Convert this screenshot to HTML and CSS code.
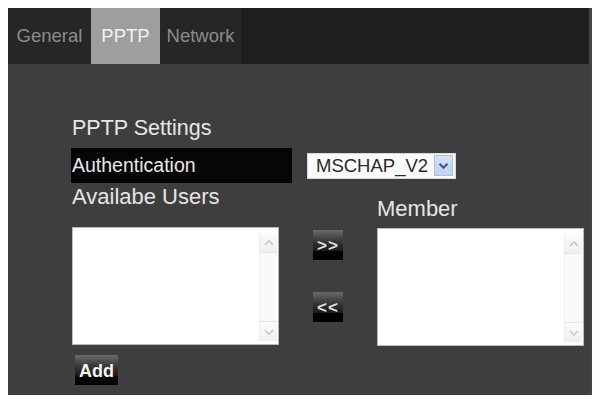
FILE: index.html
```html
<!DOCTYPE html>
<html>
<head>
<meta charset="utf-8">
<link rel="stylesheet" href="styles.css">
</head>
<body>
<div class="panel">
  <div class="tabbar">
    <div class="tab tab-general">General</div>
    <div class="tab tab-pptp active">PPTP</div>
    <div class="tab tab-network">Network</div>
  </div>
  <div class="content">
    <div class="heading">PPTP Settings</div>
    <div class="auth-row">
      <div class="auth-label">Authentication</div>
      <div class="select">
        <span class="select-text">MSCHAP_V2</span>
        <span class="select-arrow">
          <svg width="11" height="8" viewBox="0 0 11 8"><path d="M1.5 1.8 L5.5 5.8 L9.5 1.8" fill="none" stroke="#3a5a9a" stroke-width="2.2"/></svg>
        </span>
      </div>
    </div>
    <div class="lists-row">
      <div class="col-left">
        <div class="label">Availabe Users</div>
        <div class="listbox">
          <div class="scroll">
            <div class="sbtn"><svg width="12" height="8" viewBox="0 0 12 8"><path d="M2 6 L6 2 L10 6" fill="none" stroke="#c8c8c8" stroke-width="1.6"/></svg></div>
            <div class="track"></div>
            <div class="sbtn"><svg width="12" height="8" viewBox="0 0 12 8"><path d="M2 2 L6 6 L10 2" fill="none" stroke="#c8c8c8" stroke-width="1.6"/></svg></div>
          </div>
        </div>
        <div class="btn btn-add">Add</div>
      </div>
      <div class="col-mid">
        <div class="btn btn-move">&gt;&gt;</div>
        <div class="btn btn-move">&lt;&lt;</div>
      </div>
      <div class="col-right">
        <div class="label">Member</div>
        <div class="listbox">
          <div class="scroll">
            <div class="sbtn"><svg width="12" height="8" viewBox="0 0 12 8"><path d="M2 6 L6 2 L10 6" fill="none" stroke="#c8c8c8" stroke-width="1.6"/></svg></div>
            <div class="track"></div>
            <div class="sbtn"><svg width="12" height="8" viewBox="0 0 12 8"><path d="M2 2 L6 6 L10 2" fill="none" stroke="#c8c8c8" stroke-width="1.6"/></svg></div>
          </div>
        </div>
      </div>
    </div>
  </div>
</div>
</body>
</html>
```
FILE: styles.css
```css
html, body {
  margin: 0;
  padding: 0;
  background: #ffffff;
}
body {
  font-family: "Liberation Sans", Arial, sans-serif;
}
.panel {
  margin: 8px 0 0 8px;
  width: 584px;
  height: 387px;
  background: #3e3e3e;
  box-sizing: border-box;
  border-right: 3px solid #444;
}
.tabbar {
  height: 56px;
  background: #1f1f1f;
  display: flex;
}
.tab {
  height: 56px;
  display: flex;
  align-items: center;
  justify-content: center;
  font-size: 18.5px;
  color: #8c8c8c;
  background: #262626;
}
.tab-general { width: 83px; }
.tab-pptp { width: 69px; }
.tab-network { width: 81px; }
.tab.active {
  background: #9e9e9e;
  color: #f2f2f2;
}
.content {
  padding: 52px 0 0 64px;
}
.heading {
  font-size: 21.5px;
  line-height: 24px;
  color: #e6e6e6;
}
.auth-row {
  margin-top: 8px;
  margin-left: -1px;
  display: flex;
  align-items: center;
}
.auth-label {
  width: 221px;
  height: 35px;
  background: #060606;
  color: #e8e8e8;
  font-size: 19.5px;
  line-height: 35px;
  padding-left: 1px;
  box-sizing: border-box;
}
.select {
  margin-left: 15px;
  width: 149px;
  height: 26px;
  background: #fbfbfb;
  border: 1px solid #d8d8d8;
  box-sizing: border-box;
  display: flex;
  align-items: center;
  justify-content: space-between;
  padding: 0 2px 0 8px;
}
.select-text {
  font-size: 18.5px;
  color: #2a2a2a;
}
.select-arrow {
  width: 19px;
  height: 21px;
  background: linear-gradient(#d4e2f6, #bfd2f0);
  border: 1px solid #aac0e4;
  box-sizing: border-box;
  display: flex;
  align-items: center;
  justify-content: center;
}
.lists-row {
  margin-top: 1px;
  display: flex;
}
.label {
  font-size: 22px;
  line-height: 25px;
  color: #e6e6e6;
}
.col-left {
  width: 207px;
}
.col-left .listbox {
  margin-top: 18px;
}
.col-mid {
  width: 30px;
  margin: 0 34px;
  padding-top: 46px;
  display: flex;
  flex-direction: column;
  gap: 32px;
}
.col-right {
  width: 207px;
  padding-top: 12px;
}
.col-right .listbox {
  margin-top: 7px;
}
.listbox {
  height: 118px;
  background: #ffffff;
  border: 1px solid #b9b9b9;
  box-sizing: border-box;
  display: flex;
  justify-content: flex-end;
  padding: 5px 1px 3px 0;
}
.scroll {
  width: 17px;
  display: flex;
  flex-direction: column;
  background: #fafafa;
  border-left: 1px solid #eeeeee;
}
.sbtn {
  height: 19px;
  display: flex;
  align-items: center;
  justify-content: center;
  background: linear-gradient(#fbfbfb, #efefef);
  border-bottom: 1px solid #e6e6e6;
}
.sbtn:last-child {
  border-bottom: none;
  border-top: 1px solid #e6e6e6;
}
.track {
  flex: 1;
}
.btn {
  background: linear-gradient(#6a6a6a 0, #4c4c4c 22%, #2e2e2e 45%, #1c1c1c 68%, #030303 72%, #000 100%);
  color: #e0e0e0;
  font-weight: bold;
  display: flex;
  align-items: center;
  justify-content: center;
}
.btn-move {
  width: 30px;
  height: 30px;
  font-size: 17px;
  letter-spacing: 1px;
  padding-top: 2px;
  box-sizing: border-box;
}
.btn-add {
  margin: 10px 0 0 3px;
  width: 43px;
  height: 30px;
  font-size: 18px;
  color: #f4f4f4;
  padding-top: 2px;
  box-sizing: border-box;
}
```
